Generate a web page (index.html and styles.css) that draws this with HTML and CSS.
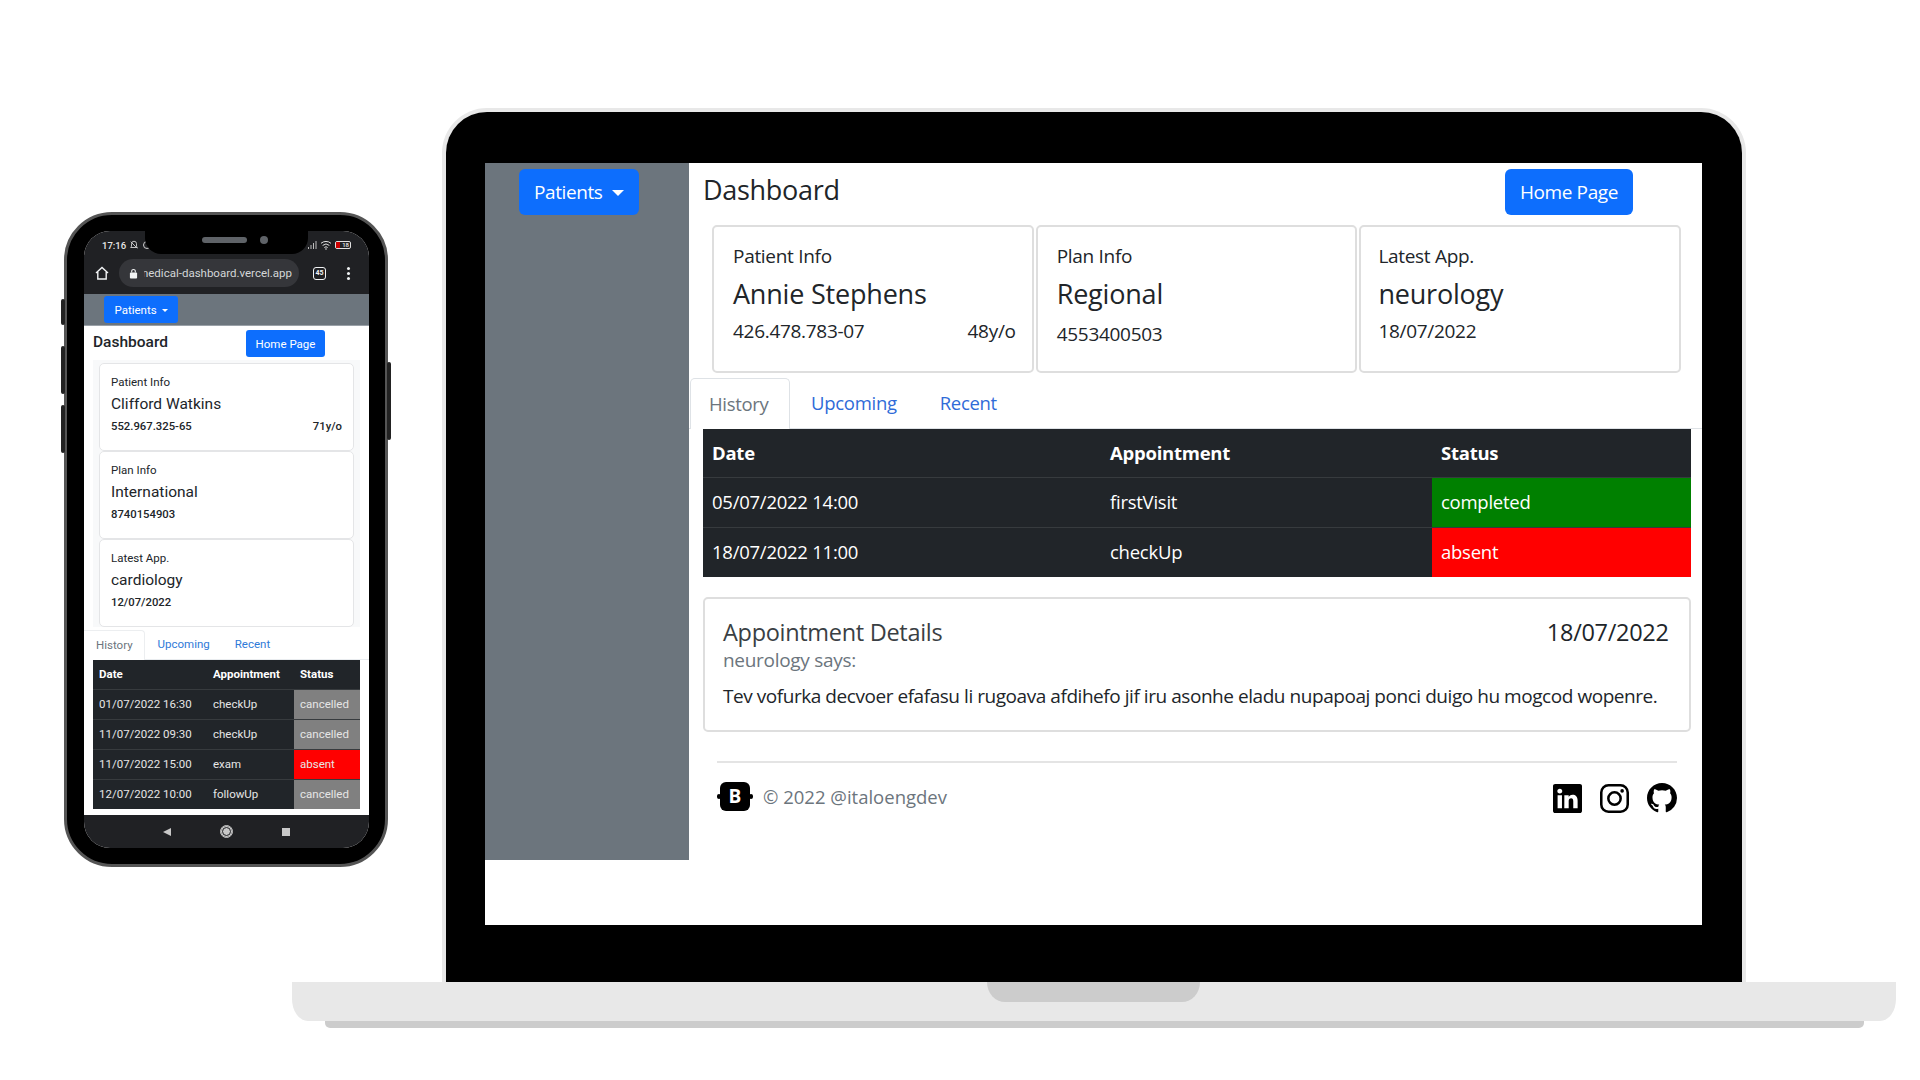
FILE: index.html
```html
<!DOCTYPE html>
<html lang="en">
<head>
    <meta charset="UTF-8">
    <title>Medical Dashboard</title>
    <link rel="stylesheet" href="styles.css">
</head>
<body>

<!-- phone mockup -->
<div class="phone">
    <span class="side-btn side-a"></span>
    <span class="side-btn side-b"></span>
    <span class="side-btn side-c"></span>
    <span class="side-btn side-d"></span>
    <div class="ph-screen">
        <div class="ph-notch">
            <span class="ph-speaker"></span>
            <span class="ph-camera"></span>
        </div>
        <div class="ph-chrome">
            <div class="ph-status">
                <span class="ph-time">17:16</span>
                <svg class="ph-mute" viewBox="0 0 12 12" width="10" height="10"><path d="M6 1.500a3 3 0 0 1 3 3v3l1 1.500H2l1-1.500v-3a3 3 0 0 1 3-3zM2 2l8 8" fill="none" stroke="#cfcfcf" stroke-width="1.100"/></svg>
                <span class="ph-status-dot"></span>
                <span class="ph-status-right">
                    <svg viewBox="0 0 10 10" width="10" height="10"><path d="M1 9V7h1v2zM3.500 9V5h1v4zM6 9V3h1v6zM8.500 9V1h1v8z" fill="#bdbdbd"/></svg>
                    <svg viewBox="0 0 14 12" width="12" height="10"><path d="M1 4a9 9 0 0 1 12 0M3 6.500a6 6 0 0 1 8 0M5 9a3 3 0 0 1 4 0" fill="none" stroke="#e0e0e0" stroke-width="1.200"/><circle cx="7" cy="10.800" r="1" fill="#e0e0e0"/></svg>
                    <span class="ph-battery"><span class="ph-battery-low"></span>18</span>
                </span>
            </div>
            <div class="ph-toolbar">
                <svg class="ph-home" viewBox="0 0 14 14" width="14" height="14"><path d="M1 7l6-5.500L13 7M2.800 6v7h8.400V6" fill="none" stroke="#f1f3f4" stroke-width="1.400"/></svg>
                <div class="ph-url">
                    <svg viewBox="0 0 10 12" width="9" height="11"><path d="M3 5V3.500a2 2 0 0 1 4 0V5" fill="none" stroke="#f1f3f4" stroke-width="1.200"/><rect x="1" y="5" width="8" height="6.500" rx="1" fill="#f1f3f4"/></svg>
                    <span class="ph-url-text">medical-dashboard.vercel.app</span>
                </div>
                <span class="ph-tabs-count">45</span>
                <span class="ph-dots"><i></i><i></i><i></i></span>
            </div>
        </div>
        <div class="ph-bar">
            <button class="btn ph-btn ph-patients">Patients <span class="caret ph-caret"></span></button>
        </div>
        <div class="ph-main">
            <div class="ph-head">
                <h2>Dashboard</h2>
                <button class="btn ph-btn ph-homepage">Home Page</button>
            </div>
            <div class="ph-cards">
                <div class="ph-card">
                    <p class="ph-label">Patient Info</p>
                    <p class="ph-name">Clifford Watkins</p>
                    <p class="ph-meta"><span>552.967.325-65</span><span>71y/o</span></p>
                </div>
                <div class="ph-card">
                    <p class="ph-label">Plan Info</p>
                    <p class="ph-name">International</p>
                    <p class="ph-meta"><span>8740154903</span></p>
                </div>
                <div class="ph-card">
                    <p class="ph-label">Latest App.</p>
                    <p class="ph-name">cardiology</p>
                    <p class="ph-meta"><span>12/07/2022</span></p>
                </div>
            </div>
            <ul class="ph-tabs">
                <li class="active">History</li>
                <li>Upcoming</li>
                <li>Recent</li>
            </ul>
            <table class="ph-table">
                <colgroup><col class="ph-col-a"><col class="ph-col-b"><col class="ph-col-c"></colgroup>
                <thead><tr><th>Date</th><th>Appointment</th><th>Status</th></tr></thead>
                <tbody>
                    <tr><td>01/07/2022 16:30</td><td>checkUp</td><td class="st-cancelled">cancelled</td></tr>
                    <tr><td>11/07/2022 09:30</td><td>checkUp</td><td class="st-cancelled">cancelled</td></tr>
                    <tr><td>11/07/2022 15:00</td><td>exam</td><td class="st-absent">absent</td></tr>
                    <tr><td>12/07/2022 10:00</td><td>followUp</td><td class="st-cancelled">cancelled</td></tr>
                </tbody>
            </table>
        </div>
        <div class="ph-nav">
            <span class="nav-back"></span>
            <span class="nav-home"></span>
            <span class="nav-square"></span>
        </div>
    </div>
</div>

<!-- laptop mockup -->
<div class="laptop">
    <div class="lap-screen">
        <aside class="lap-side">
            <button class="btn lap-btn lap-patients">Patients <span class="caret"></span></button>
        </aside>
        <main class="lap-main">
            <div class="lap-head">
                <h1>Dashboard</h1>
                <button class="btn lap-btn lap-homepage">Home Page</button>
            </div>
            <div class="lap-cards">
                <div class="lap-card">
                    <p class="lap-label">Patient Info</p>
                    <p class="lap-name">Annie Stephens</p>
                    <p class="lap-meta"><span>426.478.783-07</span><span>48y/o</span></p>
                </div>
                <div class="lap-card">
                    <p class="lap-label">Plan Info</p>
                    <p class="lap-name">Regional</p>
                    <p class="lap-meta lap-meta-low"><span>4553400503</span></p>
                </div>
                <div class="lap-card">
                    <p class="lap-label">Latest App.</p>
                    <p class="lap-name">neurology</p>
                    <p class="lap-meta"><span>18/07/2022</span></p>
                </div>
            </div>
            <ul class="lap-tabs">
                <li class="active">History</li>
                <li>Upcoming</li>
                <li>Recent</li>
            </ul>
            <table class="lap-table">
                <colgroup><col class="lap-col-a"><col class="lap-col-b"><col class="lap-col-c"></colgroup>
                <thead><tr><th>Date</th><th>Appointment</th><th>Status</th></tr></thead>
                <tbody>
                    <tr><td>05/07/2022 14:00</td><td>firstVisit</td><td class="st-completed">completed</td></tr>
                    <tr><td>18/07/2022 11:00</td><td>checkUp</td><td class="st-absent">absent</td></tr>
                </tbody>
            </table>
            <section class="lap-details">
                <div class="lap-details-top">
                    <h3>Appointment Details</h3>
                    <span>18/07/2022</span>
                </div>
                <p class="lap-says">neurology says:</p>
                <p class="lap-text">Tev vofurka decvoer efafasu li rugoava afdihefo jif iru asonhe eladu nupapoaj ponci duigo hu mogcod wopenre.</p>
            </section>
            <footer class="lap-footer">
                <div class="lap-copy">
                    <span class="bs-logo">B</span>
                    <span>© 2022 @italoengdev</span>
                </div>
                <div class="lap-social">
                    <svg viewBox="0 0 16 16" width="29" height="29"><path d="M0 1.146C0 .513.526 0 1.175 0h13.650C15.474 0 16 .513 16 1.146v13.708c0 .633-.526 1.146-1.175 1.146H1.175C.526 16 0 15.487 0 14.854V1.146zm4.943 12.248V6.169H2.542v7.225h2.401zm-1.200-8.212c.837 0 1.358-.554 1.358-1.248-.015-.709-.52-1.248-1.342-1.248-.822 0-1.359.54-1.359 1.248 0 .694.521 1.248 1.327 1.248h.016zm4.908 8.212V9.359c0-.216.016-.432.08-.586.173-.431.568-.878 1.232-.878.869 0 1.216.662 1.216 1.634v3.865h2.401V9.250c0-2.220-1.184-3.252-2.764-3.252-1.274 0-1.845.7-2.165 1.193v.025h-.016a5.540 5.540 0 0 1 .016-.025V6.169h-2.400c.03.678 0 7.225 0 7.225h2.400z"/></svg>
                    <svg viewBox="0 0 16 16" width="29" height="29"><rect x=".7" y=".7" width="14.600" height="14.600" rx="4" fill="none" stroke="#000" stroke-width="1.400"/><circle cx="8" cy="8" r="3.400" fill="none" stroke="#000" stroke-width="1.400"/><circle cx="12.200" cy="3.800" r="1"/></svg>
                    <svg viewBox="0 0 16 16" width="30" height="30"><path d="M8 0C3.580 0 0 3.580 0 8c0 3.540 2.290 6.530 5.470 7.590.4.07.55-.17.55-.38 0-.19-.01-.82-.01-1.490-2.010.37-2.530-.49-2.690-.94-.09-.23-.48-.94-.82-1.130-.28-.15-.68-.52-.01-.53.63-.01 1.080.58 1.230.82.72 1.210 1.870.87 2.330.66.07-.52.28-.87.51-1.070-1.780-.2-3.640-.89-3.640-3.950 0-.87.31-1.590.82-2.150-.08-.2-.36-1.020.08-2.120 0 0 .67-.21 2.200.82.64-.18 1.320-.27 2-.27.68 0 1.360.09 2 .27 1.530-1.040 2.200-.82 2.200-.82.44 1.100.16 1.920.08 2.120.51.56.82 1.270.82 2.150 0 3.070-1.870 3.750-3.650 3.950.29.25.54.73.54 1.480 0 1.070-.01 1.930-.01 2.200 0 .21.15.46.55.38A8.012 8.012 0 0 0 16 8c0-4.420-3.580-8-8-8z"/></svg>
                </div>
            </footer>
        </main>
    </div>
</div>
<div class="lap-base">
    <span class="lap-hinge"></span>
</div>
<div class="lap-foot"></div>

</body>
</html>
```

FILE: styles.css
```css
* {
    margin: 0;
    padding: 0;
    box-sizing: border-box;
}

html, body {
    width: 1920px;
    height: 1080px;
    background: #fff;
    overflow: hidden;
}

body {
    position: relative;
    font-family: "Open Sans", "Liberation Sans", sans-serif;
    color: #212529;
}

ul {
    list-style: none;
}

.btn {
    display: inline-block;
    border: none;
    background: #0d6efd;
    color: #fff;
    font-family: inherit;
}

.caret {
    display: inline-block;
    width: 0;
    height: 0;
    margin-left: 5px;
    vertical-align: 3px;
    border-top: 6px solid #fff;
    border-left: 6px solid transparent;
    border-right: 6px solid transparent;
}

.st-completed {
    background: #008000;
}

.st-absent {
    background: #f00;
}

.st-cancelled {
    background: #808080;
}

/* laptop */
.laptop {
    position: absolute;
    left: 442px;
    top: 108px;
    width: 1304px;
    height: 874px;
    padding: 51px 40px 57px 39px;
    background: #000;
    border: 4px solid #e8e8e8;
    border-bottom: none;
    border-radius: 45px 45px 0 0;
}

.lap-screen {
    display: flex;
    align-items: flex-start;
    height: 762px;
    background: #fff;
}

.lap-side {
    flex: none;
    width: 204px;
    height: 697px;
    padding: 6px 0 0 34px;
    background: #6c757d;
}

.lap-btn {
    height: 46px;
    border-radius: 6px;
    font-size: 19px;
    letter-spacing: -0.4px;
}

.lap-patients {
    width: 120px;
}

.lap-main {
    flex: 1;
    min-width: 0;
}

.lap-head {
    display: flex;
    justify-content: space-between;
    padding: 6px 69px 0 14px;
}

.lap-head h1 {
    padding-top: 5px;
    font-size: 27px;
    font-weight: 500;
    line-height: 32px;
    letter-spacing: -0.3px;
}

.lap-homepage {
    width: 128px;
}

.lap-cards {
    display: grid;
    grid-template-columns: repeat(3, 321.700px);
    gap: 2px;
    margin: 10px 0 0 23px;
}

.lap-card {
    height: 148px;
    padding: 15px 16px 0 19px;
    border: 2px solid #dedede;
    border-radius: 5px;
}

.lap-card:last-child {
    padding-left: 17px;
}

.lap-label {
    font-size: 19px;
    line-height: 28px;
    letter-spacing: -0.3px;
}

.lap-name {
    margin-top: 4px;
    font-size: 27px;
    font-weight: 500;
    line-height: 40px;
    letter-spacing: -0.2px;
}

.lap-meta {
    display: flex;
    justify-content: space-between;
    margin-top: 4px;
    font-size: 19px;
    line-height: 26px;
    letter-spacing: -0.3px;
}

.lap-meta-low {
    margin-top: 7px;
}

.lap-tabs {
    display: flex;
    height: 51px;
    margin-top: 5px;
    padding-left: 1px;
    border-bottom: 1px solid #dee2e6;
    font-size: 18.500px;
    line-height: 50px;
    letter-spacing: -0.3px;
    color: #2f6bd8;
}

.lap-tabs li {
    padding: 0 21.500px;
}

.lap-tabs li.active {
    height: 51px;
    padding: 0 20px 0 18px;
    color: #6c757d;
    background: #fff;
    border: 1px solid #dee2e6;
    border-bottom: none;
    border-radius: 5px 5px 0 0;
}

.lap-table {
    width: 987.600px;
    margin-left: 14px;
    border-collapse: collapse;
    table-layout: fixed;
    background: #212529;
    color: #fff;
    font-size: 18.500px;
    letter-spacing: -0.25px;
}

.lap-col-a { width: 398px; }
.lap-col-b { width: 331px; }

.lap-table th {
    height: 48px;
    padding-left: 9px;
    text-align: left;
    font-weight: 700;
}

.lap-table td {
    height: 50px;
    padding: 0 0 2px 9px;
    border-top: 1px solid #373b3e;
}

.lap-details {
    width: 987.600px;
    height: 135px;
    margin: 20px 0 0 14px;
    padding: 17px 20px 0 18px;
    border: 2px solid #dedede;
    border-radius: 5px;
}

.lap-details-top {
    display: flex;
    justify-content: space-between;
    font-size: 23.500px;
    line-height: 32px;
    letter-spacing: -0.3px;
}

.lap-details-top h3 {
    font-size: inherit;
    font-weight: 400;
    color: #3a3f44;
}

.lap-says {
    font-size: 19px;
    line-height: 24px;
    letter-spacing: -0.3px;
    color: #6c757d;
}

.lap-text {
    margin-top: 11px;
    font-size: 19px;
    line-height: 26px;
    letter-spacing: -0.45px;
}

.lap-footer {
    display: flex;
    justify-content: space-between;
    width: 960px;
    margin: 29px 0 0 28px;
    padding-top: 18px;
    border-top: 2px solid #e4e4e4;
}

.lap-copy {
    display: flex;
    align-items: center;
    gap: 10px;
    height: 30px;
    font-size: 18.500px;
    color: #6c757d;
}

.bs-logo {
    position: relative;
    width: 30px;
    height: 29px;
    margin: 0 3px;
    background: #000;
    border-radius: 6px;
    color: #fff;
    font-size: 19px;
    font-weight: 700;
    line-height: 29px;
    text-align: center;
}

.bs-logo::before,
.bs-logo::after {
    content: "";
    position: absolute;
    top: 12px;
    width: 4px;
    height: 5px;
    background: #000;
    border-radius: 2px;
}

.bs-logo::before { left: -3px; }
.bs-logo::after { right: -3px; }

.lap-social {
    display: flex;
    align-items: center;
    gap: 18px;
    height: 30px;
    margin-top: 2px;
}

.lap-base {
    position: absolute;
    left: 292px;
    top: 982px;
    width: 1604px;
    height: 39px;
    background: #e8e8e8;
    border-radius: 0 0 16px 16px / 0 0 22px 22px;
}

.lap-hinge {
    position: absolute;
    left: 695px;
    top: 0;
    width: 213px;
    height: 20px;
    background: #ccc;
    border-radius: 0 0 18px 18px / 0 0 20px 20px;
}

.lap-foot {
    position: absolute;
    left: 325px;
    top: 1021px;
    width: 1539px;
    height: 7px;
    background: #ccc;
    border-radius: 0 0 5px 5px;
}

/* phone */
.phone {
    position: absolute;
    left: 64px;
    top: 212px;
    width: 324px;
    height: 655px;
    padding: 16px 16px 16px 17px;
    background: #000;
    border: 3px solid #555;
    border-radius: 48px;
    font-family: Roboto, "Liberation Sans", sans-serif;
}

.side-btn {
    position: absolute;
    width: 4px;
    background: #222;
    border-radius: 2px;
}

.side-a { left: -6px; top: 84px; height: 26px; }
.side-b { left: -6px; top: 131px; height: 48px; }
.side-c { left: -6px; top: 190px; height: 48px; }
.side-d { right: -6px; top: 147px; height: 78px; }

.ph-screen {
    position: relative;
    display: flex;
    flex-direction: column;
    width: 285px;
    height: 617px;
    overflow: hidden;
    background: #fff;
    border-radius: 26px;
}

.ph-notch {
    position: absolute;
    left: 61px;
    top: 0;
    width: 163px;
    height: 23px;
    background: #000;
    border-radius: 0 0 16px 16px;
}

.ph-speaker {
    position: absolute;
    left: 57px;
    top: 6px;
    width: 45px;
    height: 6px;
    background: #5f6368;
    border-radius: 3px;
}

.ph-camera {
    position: absolute;
    left: 115px;
    top: 5px;
    width: 8px;
    height: 8px;
    background: #5f6368;
    border-radius: 50%;
}

.ph-chrome {
    height: 63px;
    background: #202124;
}

.ph-status {
    display: flex;
    align-items: center;
    gap: 3px;
    height: 28px;
    padding: 0 18px;
    color: #e8e8e8;
    font-size: 9.500px;
    font-weight: 500;
}

.ph-status-dot {
    width: 8px;
    height: 8px;
    margin-left: 1px;
    border: 1px solid #cfcfcf;
    border-radius: 50%;
}

.ph-status-right {
    display: flex;
    align-items: center;
    gap: 3px;
    margin-left: auto;
}

.ph-battery {
    position: relative;
    width: 16px;
    height: 8px;
    border: 1px solid #e0e0e0;
    border-radius: 2px;
    font-size: 6px;
    line-height: 6px;
    text-align: right;
    padding-right: 1px;
}

.ph-battery-low {
    position: absolute;
    left: 0;
    top: 0;
    width: 4px;
    height: 6px;
    background: #c00;
}

.ph-toolbar {
    display: flex;
    align-items: center;
    height: 28px;
    padding-left: 11px;
}

.ph-url {
    display: flex;
    align-items: center;
    gap: 6px;
    width: 180px;
    height: 28px;
    margin-left: 10px;
    padding-left: 10px;
    overflow: hidden;
    background: #35363a;
    border-radius: 14px;
    color: #d4d6d8;
}

.ph-url-text {
    width: 148px;
    overflow: hidden;
    direction: rtl;
    font-size: 11.500px;
    text-align: right;
    white-space: nowrap;
}

.ph-tabs-count {
    width: 13px;
    height: 13px;
    margin-left: 14px;
    border: 1.500px solid #f1f3f4;
    border-radius: 3px;
    color: #f1f3f4;
    font-size: 7px;
    font-weight: 700;
    line-height: 10px;
    text-align: center;
}

.ph-dots {
    display: flex;
    flex-direction: column;
    gap: 2px;
    margin-left: 21px;
}

.ph-dots i {
    width: 3px;
    height: 3px;
    background: #f1f3f4;
    border-radius: 50%;
}

.ph-bar {
    height: 32px;
    padding: 2px 0 0 20px;
    background: #6c757d;
    border-bottom: 1px solid #9aa1a8;
}

.ph-btn {
    height: 27px;
    border-radius: 3px;
    font-size: 11.500px;
}

.ph-patients {
    width: 74px;
}

.ph-caret {
    margin-left: 2px;
    vertical-align: 2px;
    border-top-width: 3px;
    border-left-width: 3px;
    border-right-width: 3px;
}

.ph-main {
    flex: 1;
    min-height: 0;
}

.ph-head {
    display: flex;
    justify-content: space-between;
    padding: 4px 44px 0 9px;
}

.ph-head h2 {
    font-size: 15.500px;
    font-weight: 500;
    line-height: 24px;
}

.ph-homepage {
    width: 79px;
}

.ph-cards {
    margin: 3px 9px 0;
    padding: 3px 6px 0;
    background: #f8f9fa;
}

.ph-card {
    height: 88px;
    padding: 10px 11px 0;
    background: #fff;
    border: 1px solid #e4e5e7;
    border-radius: 5px;
}

.ph-label {
    font-size: 11.500px;
    line-height: 16px;
}

.ph-name {
    margin-top: 3px;
    font-size: 15.500px;
    line-height: 22px;
}

.ph-meta {
    display: flex;
    justify-content: space-between;
    margin-top: 4px;
    font-size: 11.300px;
    font-weight: 500;
    line-height: 16px;
}

.ph-tabs {
    display: flex;
    height: 30px;
    margin-top: 3px;
    border-bottom: 1px solid #e9ecef;
    color: #2f7ad8;
    font-size: 11.500px;
    line-height: 29px;
}

.ph-tabs li {
    padding: 0 12px 0 13px;
}

.ph-tabs li.active {
    height: 30px;
    padding: 0 11px 0 12px;
    background: #fff;
    color: #6c757d;
    border: 1px solid #eceef0;
    border-left: none;
    border-bottom: none;
    border-radius: 0 4px 0 0;
}

.ph-table {
    width: 267px;
    margin-left: 9px;
    border-collapse: collapse;
    table-layout: fixed;
    background: #212529;
    color: #e6e6e6;
    font-size: 11.500px;
}

.ph-col-a { width: 114px; }
.ph-col-b { width: 87px; }

.ph-table th {
    height: 29px;
    padding-left: 6px;
    text-align: left;
    font-weight: 700;
    color: #fff;
}

.ph-table td {
    height: 30px;
    padding-left: 6px;
    white-space: nowrap;
    border-top: 1px solid #373b3e;
}

.ph-nav {
    display: flex;
    align-items: center;
    justify-content: center;
    gap: 49px;
    height: 33px;
    background: #202124;
}

.nav-back {
    width: 0;
    height: 0;
    border-top: 4.500px solid transparent;
    border-bottom: 4.500px solid transparent;
    border-right: 8px solid #c8c8c8;
}

.nav-home {
    width: 13px;
    height: 13px;
    background: #c8c8c8;
    border: 3px double #202124;
    outline: 1px solid #c8c8c8;
    outline-offset: -1px;
    border-radius: 50%;
}

.nav-square {
    width: 8px;
    height: 8px;
    background: #c8c8c8;
}
```
